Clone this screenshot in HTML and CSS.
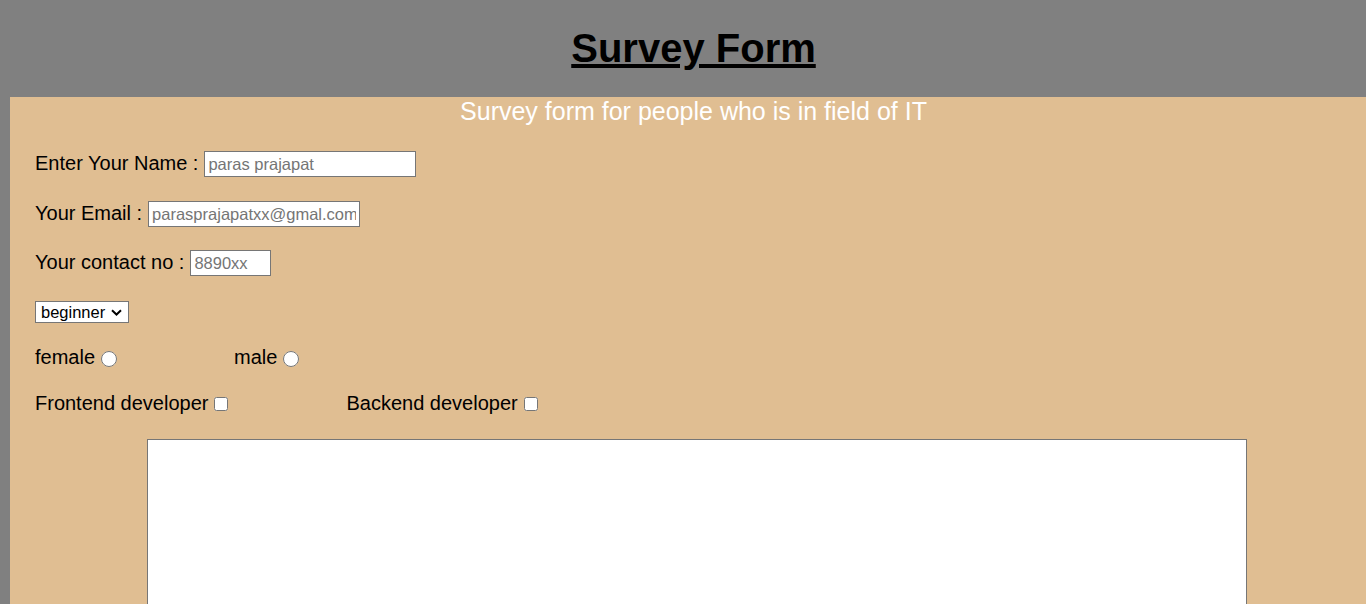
FILE: index.html
```html
<!DOCTYPE html>
<html lang="en">
<head>
<meta charset="utf-8">
<title>Survey Form</title>
<link rel="stylesheet" href="styles.css">
</head>
<body>
<header class="top">
  <h1 class="title">Survey Form</h1>
</header>
<form class="survey">
  <p class="subtitle">Survey form for people who is in field of IT</p>
  <div class="row row-name">
    <label class="lbl" for="name">Enter Your Name :</label>
    <input class="field field-wide" id="name" type="text" placeholder="paras prajapat">
  </div>
  <div class="row row-email">
    <label class="lbl" for="email">Your Email :</label>
    <input class="field field-wide" id="email" type="email" placeholder="parasprajapatxx@gmal.com">
  </div>
  <div class="row row-contact">
    <label class="lbl" for="contact">Your contact no :</label>
    <input class="field field-short" id="contact" type="text" placeholder="8890xx">
  </div>
  <div class="row row-level">
    <select class="level">
      <option>beginner</option>
      <option>intermediate</option>
      <option>expert</option>
    </select>
  </div>
  <div class="row row-choice row-gender">
    <label class="choice">female <input class="radio" type="radio" name="gender"></label>
    <label class="choice choice-male">male <input class="radio" type="radio" name="gender"></label>
  </div>
  <div class="row row-choice row-role">
    <label class="choice">Frontend developer<input class="check" type="checkbox"></label>
    <label class="choice choice-back">Backend developer<input class="check" type="checkbox"></label>
  </div>
  <textarea class="comments"></textarea>
</form>
</body>
</html>
```

FILE: styles.css
```css
html, body {
  margin: 0;
  padding: 0;
}
body {
  background: #808080;
  font-family: "Liberation Sans", Arial, sans-serif;
  color: #000;
}
.top {
  padding: 25px 0 26px 21px;
  text-align: center;
}
.title {
  margin: 0;
  font-size: 40px;
  line-height: 46px;
  font-weight: bold;
  text-decoration: underline;
}
.survey {
  margin: 0 0 0 10px;
  padding: 0 0 23px 25px;
  background: #e0be92;
  display: flex;
  flex-direction: column;
  align-items: flex-start;
}
.subtitle {
  align-self: stretch;
  margin: 0;
  padding-right: 14px;
  color: #fff;
  font-size: 25px;
  line-height: 28px;
  text-align: center;
}
.row {
  display: flex;
  align-items: baseline;
  font-size: 20px;
  line-height: 23px;
}
.row-name { margin-top: 26px; }
.row-email { margin-top: 24px; }
.row-contact { margin-top: 23px; }
.row-level { margin-top: 25px; }
.row-choice {
  height: 30px;
  align-items: center;
}
.row-gender { margin-top: 19px; }
.row-role { margin-top: 16px; }
.lbl {
  margin-right: 6px;
}
.field {
  box-sizing: border-box;
  height: 26px;
  border: 1px solid #767676;
  border-radius: 0;
  padding: 1px 3px;
  font-family: "Liberation Sans", Arial, sans-serif;
  font-size: 16.5px;
  background: #fff;
}
.field::placeholder {
  color: #757575;
}
.field-wide { width: 212px; }
.field-short { width: 81px; }
.level {
  box-sizing: border-box;
  width: 94px;
  height: 22px;
  padding: 0 0 0 5px;
  font-family: "Liberation Sans", Arial, sans-serif;
  font-size: 16.5px;
  border: 1px solid #767676;
  border-radius: 0;
  color: #000;
  -webkit-appearance: none;
  appearance: none;
  background: #fff url("data:image/svg+xml,%3Csvg xmlns='http://www.w3.org/2000/svg' width='11' height='7' viewBox='0 0 11 7'%3E%3Cpath d='M1 1.2 L5.5 5.5 L10 1.2' fill='none' stroke='%23000' stroke-width='2'/%3E%3C/svg%3E") no-repeat right 6px center;
}
.choice {
  display: flex;
  align-items: center;
}
.choice-male { margin-left: 117px; }
.choice-back { margin-left: 118px; }
.radio {
  width: 16px;
  height: 16px;
  margin: 3px 0 0 6px;
}
.check {
  width: 14px;
  height: 14px;
  margin: 2px 0 0 6px;
}
.comments {
  box-sizing: border-box;
  margin: 21px 0 0 112px;
  width: 1100px;
  height: 230px;
  border: 1px solid #767676;
  background: #fff;
  resize: vertical;
}
```
